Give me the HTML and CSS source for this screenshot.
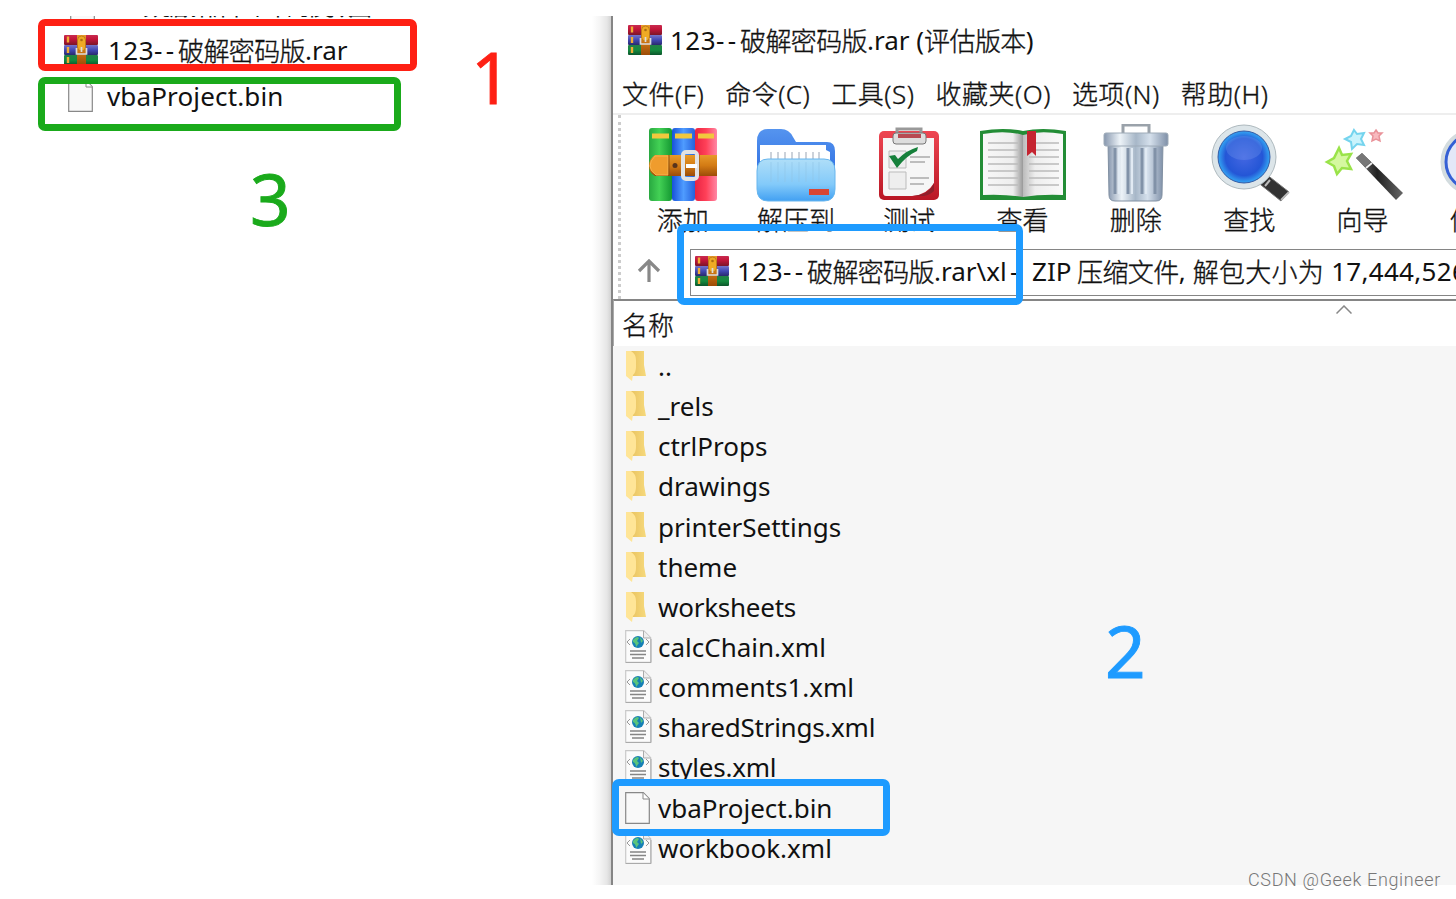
FILE: index.html
```
<!DOCTYPE html>
<html lang="zh-CN">
<head>
<meta charset="utf-8">
<title>123--破解密码版.rar</title>
<link rel="stylesheet" href="styles.css">
</head>
<body>
<svg class="defs" width="0" height="0">
  <defs>
    <linearGradient id="strap" x1="0" y1="0" x2="0" y2="1"><stop offset="0" stop-color="#e89a2a"/><stop offset=".5" stop-color="#d37b14"/><stop offset="1" stop-color="#9c4c08"/></linearGradient>
    <linearGradient id="rRed" x1="0" y1="0" x2="0" y2="1"><stop offset="0" stop-color="#c82c50"/><stop offset=".4" stop-color="#c4163a"/><stop offset="1" stop-color="#7c1528"/></linearGradient>
    <linearGradient id="rBlue" x1="0" y1="0" x2="0" y2="1"><stop offset="0" stop-color="#7775c9"/><stop offset=".5" stop-color="#4148b4"/><stop offset="1" stop-color="#29296d"/></linearGradient>
    <linearGradient id="rGreen" x1="0" y1="0" x2="0" y2="1"><stop offset="0" stop-color="#248048"/><stop offset=".5" stop-color="#148b3f"/><stop offset="1" stop-color="#0c552b"/></linearGradient>
    <linearGradient id="bGreen"><stop offset="0" stop-color="#28a840"/><stop offset=".45" stop-color="#43d155"/><stop offset="1" stop-color="#149832"/></linearGradient>
    <linearGradient id="bBlue"><stop offset="0" stop-color="#1751d9"/><stop offset=".5" stop-color="#4f9cff"/><stop offset="1" stop-color="#2661dc"/></linearGradient>
    <linearGradient id="bRed"><stop offset="0" stop-color="#e82342"/><stop offset=".5" stop-color="#ff4058"/><stop offset="1" stop-color="#ff87a5"/></linearGradient>
    <linearGradient id="pocket" x1="0" y1="0" x2="0" y2="1"><stop offset="0" stop-color="#afdef8"/><stop offset=".6" stop-color="#83cafa"/><stop offset="1" stop-color="#42a0f2"/></linearGradient>
    <linearGradient id="back" x1="0" y1="0" x2="0" y2="1"><stop offset="0" stop-color="#5594ef"/><stop offset="1" stop-color="#2868df"/></linearGradient>
    <linearGradient id="board" x1="0" y1="0" x2="0" y2="1"><stop offset="0" stop-color="#ee4652"/><stop offset="1" stop-color="#b91725"/></linearGradient>
    <linearGradient id="pageL"><stop offset="0" stop-color="#f8f8f8"/><stop offset=".75" stop-color="#eee"/><stop offset="1" stop-color="#999"/></linearGradient>
    <linearGradient id="pageR"><stop offset="0" stop-color="#bbb"/><stop offset=".3" stop-color="#eee"/><stop offset="1" stop-color="#fafafa"/></linearGradient>
    <linearGradient id="can"><stop offset="0" stop-color="#8797ae"/><stop offset=".25" stop-color="#edf3f8"/><stop offset=".5" stop-color="#a7b7c8"/><stop offset=".72" stop-color="#d5e0ec"/><stop offset="1" stop-color="#7f90a8"/></linearGradient>
    <radialGradient id="lens" cx=".5" cy=".5" r=".55"><stop offset="0" stop-color="#4467e2"/><stop offset=".65" stop-color="#2456d6"/><stop offset=".88" stop-color="#329df0"/><stop offset="1" stop-color="#1c49ac"/></radialGradient>
    <linearGradient id="wand"><stop offset="0" stop-color="#777"/><stop offset=".45" stop-color="#222"/><stop offset="1" stop-color="#666"/></linearGradient>
    <linearGradient id="fold"><stop offset="0" stop-color="#e9c25f"/><stop offset="1" stop-color="#f6d97c"/></linearGradient>
    <symbol id="rar" viewBox="0 0 34 30">
      <rect width="34" height="10" rx="1" fill="url(#rRed)"/><rect y="10" width="34" height="10" rx="1" fill="url(#rBlue)"/><rect y="20" width="34" height="10" rx="1" fill="url(#rGreen)"/>
      <path d="M4 1.5v6M4 12v6M4 22v6" stroke="#f1ac35" stroke-width="2.4"/>
      <rect x="13" width="9" height="30" fill="url(#strap)"/><rect x="13.5" y="1" width="8" height="15" rx="4" fill="#efaa24" stroke="#ac6b18" stroke-width=".7"/>
      <circle cx="17.500" cy="5" r="1.300" fill="#aa6d11"/><path d="M12.500 13v6h10v-6M17.500 12v5" fill="none" stroke="#ddd" stroke-width="1.700"/>
    </symbol>
    <symbol id="folder" viewBox="0 0 20 30"><path d="M4 0h14v14l2 11H5z" fill="url(#fold)"/><path d="M0 0h5q5 3 5 9v7q0 5-3 8l-1 6-6-5z" fill="#ffe597"/></symbol>
    <symbol id="page" viewBox="0 0 25 32"><path d="M.7.7h17.600l6 6v24.600H.7z" fill="#f9f9f9" stroke="#888" stroke-width="1.200"/><path d="M18 1v6h6" fill="#fff" stroke="#888"/></symbol>
    <symbol id="xml" viewBox="0 0 27 34">
      <path d="M.7.7h18l7 7v24.600H.7z" fill="#fbfbfb" stroke="#c8c8c8" stroke-width="1.200"/><path d="M1 32.500h25V9" fill="none" stroke="#aaa"/><path d="M18.500 1v7h7" fill="#eee" stroke="#aaa"/>
      <circle cx="13" cy="12" r="6" fill="#1680b5"/><path d="M8 10q4-5 6-2l-2 3 2 2-3 4q0-4-3-5zM15 7l3 4-2 2z" fill="#5bc47a"/><path d="M5 9l-3 3 3 3M21 9l3 3-3 3" fill="none" stroke="#999"/>
      <path d="M5 21h16M5 24.500h16M7 28h12" stroke="#858585" stroke-width="1.500"/>
    </symbol>
  </defs>
</svg>
<main class="shot">
  <section class="desktop">
    <div class="file cut"><svg class="cut-page"><use href="#page"/></svg><span>数据解析下个中的模拟图</span></div>
    <div class="file first"><svg class="rar"><use href="#rar"/></svg><span class="name"><i class="num">123</i><i class="dashes">--</i><i class="han">破解密码版</i><i>.rar</i></span></div>
    <div class="file second"><svg class="page"><use href="#page"/></svg><span class="name">vbaProject.bin</span></div>
  </section>
  <section class="window">
    <header class="title"><svg class="rar"><use href="#rar"/></svg><span class="name"><i class="num">123</i><i class="dashes">--</i><i class="han">破解密码版</i><i>.rar (</i><i class="han">评估版本</i><i>)</i></span></header>
    <nav class="menu"><span>文件(F)</span><span>命令(C)</span><span>工具(S)</span><span>收藏夹(O)</span><span>选项(N)</span><span>帮助(H)</span></nav>
    <div class="bars">
      <div class="toolbar">
        <div class="tool"><svg viewBox="0 0 90 80"><rect x="11" y="4" width="23" height="73" rx="3" fill="url(#bGreen)"/><rect x="34" y="4" width="23" height="73" rx="3" fill="url(#bBlue)"/><rect x="57" y="4" width="22" height="73" rx="3" fill="url(#bRed)"/><path d="M14 12h17M37 12h17M60 12h16" stroke="#f1c83d" stroke-width="5"/><path d="M17 31h62v21H17q-6-3-6-10t6-11z" fill="url(#strap)"/><path d="M17 32h13v19H18q-6-4-6-9t5-10z" fill="#ef9c2d" stroke="#f6b34e"/><path d="M31 31v21M61 31v21" stroke="#8e5010"/><circle cx="37" cy="41.500" r="2.500" fill="#59341c"/><rect x="45" y="28" width="14" height="27" rx="3" fill="none" stroke="#e2e2e4" stroke-width="4"/><path d="M48 42h11" stroke="#fff" stroke-width="4"/></svg><span>添加</span></div>
        <div class="tool"><svg viewBox="0 0 90 80"><path d="M6 17q0-12 11-12h13q8 0 12 8l3 5h31q8 0 8 9v35H6z" fill="url(#back)"/><path d="M9 21h66v5l4 2v31H9z" fill="#fff"/><path d="M20 28v16M27 28v16M34 28v16M41 28v16M48 28v16M55 28v16M62 28v16M68 28v16" stroke="#bcc3ce" stroke-width="1.500"/><path d="M6 47q0-12 11-12h56q11 0 11 12v18q0 12-11 12H17Q6 77 6 65z" fill="url(#pocket)" stroke="#68b6ee"/><path d="M20 38v20M27 38v20M34 38v20M41 38v20M48 38v20M55 38v20M62 38v20M68 38v20" stroke="#8fc5e7" opacity=".6"/><rect x="58" y="65" width="20" height="6" fill="#d84534"/></svg><span>解压到</span></div>
        <div class="tool"><svg viewBox="0 0 90 80"><rect x="15" y="7" width="60" height="69" rx="5" fill="url(#board)"/><path d="M19 14h51v45q-7 12-22 13H22q-3 0-3-4z" fill="#f6f6f6"/><path d="M49 72q16-1 21-13v8q-4 4-10 5z" fill="#8f202b"/><path d="M33 9V5h24v4" fill="none" stroke="#999" stroke-width="3"/><rect x="29" y="9" width="33" height="11" rx="3" fill="#ddd" stroke="#777"/><rect x="34" y="10" width="23" height="4" fill="#b84a52"/><path d="M25 27h17v17H25zM25 48h17v17H25z" fill="#eee" stroke="#bbb"/><path d="M25 32l6-1 3 4q9-9 20-12l-1 4q-11 5-20 17z" fill="#16803b"/><path d="M46 33h20M46 38h15M46 54h19M46 60h14" stroke="#aaa" stroke-width="1.400"/></svg><span>测试</span></div>
        <div class="tool"><svg viewBox="0 0 90 80"><path d="M2 7q24-4 43 0 19-4 43 0v69H2z" fill="#238d36"/><path d="M5 10q23-4 40 1v62q-18-3-40-2z" fill="url(#pageL)"/><path d="M45 11q17-5 40-1v61q-22-1-40 2z" fill="url(#pageR)"/><path d="M10 19h30M10 26h30M10 33h30M10 40h30M10 47h30M10 54h30M10 61h30M51 19h30M51 26h30M51 33h30M51 40h30M51 47h30M51 54h30M51 61h30" stroke="#bbb" stroke-width="1.300"/><path d="M49 7h9v25l-4-4-5 4z" fill="#c52430"/></svg><span>查看</span></div>
        <div class="tool"><svg viewBox="0 0 90 80"><path d="M32 9V1h26v8" fill="none" stroke="#9aa2aa" stroke-width="3"/><path d="M17 18h55l-1 53q0 6-6 6H24q-6 0-6-6z" fill="url(#can)" stroke="#8190a2"/><rect x="13" y="9" width="64" height="13" rx="2" fill="url(#can)" stroke="#9eabb8"/><path d="M24 24v46M37 24v46M51 24v46M64 24v46" stroke="#8192a8" stroke-width="3"/><path d="M28 24v46M41 24v46M55 24v46" stroke="#e1eaf3" stroke-width="2"/></svg><span>删除</span></div>
        <div class="tool"><svg viewBox="0 0 90 80"><path d="M62 50l23 18-8 9-25-20z" fill="#333" stroke="#777"/><path d="M66 56l-5 6M85 68l-8 8" stroke="#bbb" stroke-width="2"/><circle cx="40" cy="33" r="32" fill="#dce5e9" stroke="#aeb9be"/><circle cx="40" cy="33" r="26" fill="url(#lens)" stroke="#365ea7"/><ellipse cx="40" cy="24" rx="18" ry="12" fill="#789cf0" opacity=".3"/></svg><span>查找</span></div>
        <div class="tool"><svg viewBox="0 0 90 80"><path d="M45 29l-6 5 40 42 7-7z" fill="url(#wand)"/><path d="M45 29l-6 5 9 9 6-5z" fill="#777"/><path d="M49 44l6-5" stroke="#eee" stroke-width="2"/><path d="M22 24l3 7 9-1-4 7 4 8-9-1-5 6-3-8-7-4 7-4z" fill="#d5f8a0" stroke="#9ae34a" stroke-width="2.500"/><path d="M37 6l3 4 7-1-3 6 3 6-7-1-5 5-1-7-6-3 6-3z" fill="#c9f3fc" stroke="#75d4ee" stroke-width="2"/><path d="M59 6l2 3h4l-3 3 1 5-4-2-4 2 1-5-3-3h4z" fill="#f8b9be" stroke="#e99299" stroke-width="1.500"/></svg><span>向导</span></div>
        <div class="tool"><svg viewBox="0 0 90 80"><circle cx="43" cy="38" r="31" fill="#e1e7f8" stroke="#d3dcdf" stroke-width="5"/><circle cx="43" cy="38" r="28" fill="#e3e8f8" stroke="#3560d5" stroke-width="3"/></svg><span>信息</span></div>
      </div>
      <div class="address">
        <svg class="up" viewBox="0 0 24 24"><path d="M12 23V2M2 12L12 2l10 10" fill="none" stroke="#888" stroke-width="3.200"/></svg>
        <div class="field"><svg class="rar"><use href="#rar"/></svg><span class="name"><i class="num">123</i><i class="dashes">--</i><i class="han">破解密码版</i><i class="path">.rar\xl</i><i class="dash">-</i><i class="zip">ZIP</i><i class="han">压缩文件</i><i class="comma">,</i><i class="han wide">解包大小为</i><i class="size">17,444,526</i></span></div>
      </div>
    </div>
    <div class="column"><span>名称</span><svg class="sort" viewBox="0 0 16 9"><path d="M.5 8.500L8 1l7.500 7.500" fill="none" stroke="#888" stroke-width="1.500"/></svg></div>
    <div class="list">
      <div class="row"><svg class="folder"><use href="#folder"/></svg><span>..</span></div>
      <div class="row"><svg class="folder"><use href="#folder"/></svg><span>_rels</span></div>
      <div class="row"><svg class="folder"><use href="#folder"/></svg><span>ctrlProps</span></div>
      <div class="row"><svg class="folder"><use href="#folder"/></svg><span>drawings</span></div>
      <div class="row"><svg class="folder"><use href="#folder"/></svg><span>printerSettings</span></div>
      <div class="row"><svg class="folder"><use href="#folder"/></svg><span>theme</span></div>
      <div class="row"><svg class="folder"><use href="#folder"/></svg><span class="tight">worksheets</span></div>
      <div class="row"><svg class="xml"><use href="#xml"/></svg><span>calcChain.xml</span></div>
      <div class="row"><svg class="xml"><use href="#xml"/></svg><span>comments1.xml</span></div>
      <div class="row"><svg class="xml"><use href="#xml"/></svg><span class="tight">sharedStrings.xml</span></div>
      <div class="row"><svg class="xml"><use href="#xml"/></svg><span class="tight">styles.xml</span></div>
      <div class="row"><svg class="page"><use href="#page"/></svg><span>vbaProject.bin</span></div>
      <div class="row"><svg class="xml"><use href="#xml"/></svg><span>workbook.xml</span></div>
    </div>
  </section>
</main>
<div class="mark red"></div><div class="mark green"></div><div class="mark blue path-mark"></div><div class="mark blue file-mark"></div>
<b class="digit one">1</b><b class="digit two">2</b><b class="digit three">3</b>
<div class="credit">CSDN @Geek Engineer</div>
</body>
</html>
```
FILE: styles.css
```
* { box-sizing: border-box; }
body { margin: 0; height: 899px; padding: 16px 0 14px; overflow: hidden; position: relative; background: #fff; color: #111; font: 26px/40px "Noto Sans", "Noto Sans CJK SC", sans-serif; white-space: nowrap; }
svg { display: block; flex: none; }
i { font-style: normal; }
.defs { position: absolute; }
.shot { display: flex; height: 869px; overflow: hidden; }

.desktop { width: 611px; flex: none; background: linear-gradient(90deg, #fff 592px, #f4f4f4 600px, #e6e6e6 607px, #d2d2d2); }
.file { display: flex; align-items: center; }
.cut { height: 5px; padding-left: 70px; overflow: hidden; align-items: flex-end; }
.cut span { padding-left: 48px; font-size: 24px; line-height: 30px; letter-spacing: -3.500px; }
.cut-page { width: 25px; height: 32px; }
.first { height: 57px; padding-left: 64px; }
.second { height: 36px; padding-left: 68px; }
.first .name { margin-left: 10px; }
.second .name { margin-left: 14px; letter-spacing: .15px; }
.rar { width: 34px; height: 30px; }
.page { width: 25px; height: 32px; }
.name { display: flex; }
.num { width: 46px; letter-spacing: .5px; }
.dashes { width: 24px; letter-spacing: 3.400px; }
.han { font-family: "Noto Sans CJK SC", sans-serif; font-weight: 300; letter-spacing: -.6px; }
.wide { letter-spacing: .3px; }
.han, .menu, .tool, .column { -webkit-text-stroke: .35px #111; }

.window { width: 845px; flex: none; border-left: 2px solid #858585; overflow: hidden; display: flex; flex-direction: column; }
.title { display: flex; align-items: center; height: 48px; padding-left: 15px; }
.title .name { margin-left: 8px; }
.menu { display: flex; gap: 21px; height: 51px; align-items: center; padding: 10px 0 0 9px; font-weight: 300; letter-spacing: .5px; border-bottom: 2px solid #eee; }
.bars { height: 184px; margin-left: 5px; border-left: 3px dotted #ccc; }
.toolbar { height: 128px; display: flex; padding: 9px 0 0 5px; }
.tool { width: 113.300px; flex: none; display: flex; flex-direction: column; align-items: center; font-family: "Noto Sans CJK SC", sans-serif; font-weight: 300; }
.tool svg { width: 90px; height: 80px; }
.tool span { line-height: 30px; }
.address { display: flex; height: 56px; align-items: center; padding-left: 16px; }
.up { width: 24px; height: 24px; margin-right: 29px; }
.field { height: 47px; width: 800px; flex: none; margin-top: 2px; border: 1.500px solid #858585; display: flex; align-items: center; padding: 0 0 2px 4px; }
.field .name { margin-left: 8px; }
.path { width: 76px; }
.dash { width: 22px; }
.zip { width: 45px; }
.comma { width: 14px; }
.size { padding-left: 7px; letter-spacing: .3px; }
.column { height: 47px; position: relative; border-top: 2px solid #858585; border-left: 1px solid #aaa; padding: 3px 0 0 8px; background: #fff; font-family: "Noto Sans CJK SC", sans-serif; font-weight: 300; }
.sort { position: absolute; left: 722px; top: 4px; width: 16px; height: 9px; }
.list { flex: 1; background: #f6f6f6; padding-left: 12px; }
.row { height: 40.150px; display: flex; align-items: center; }
.row span { margin-left: -1px; }
.row .tight { letter-spacing: -.25px; }
.folder { width: 20px; height: 30px; }
.row .folder { margin-right: 13px; margin-left: 1px; }
.xml { width: 27px; height: 34px; }
.row .xml { margin-right: 7px; }
.row .page { margin-right: 9px; }

.mark { position: absolute; border: 7px solid; border-radius: 7px; }
.red { left: 38px; top: 19px; width: 379px; height: 52px; border-color: #fe2014; }
.green { left: 38px; top: 77px; width: 363px; height: 54px; border-color: #1aaa1b; }
.blue { border-color: #1e9bff; }
.path-mark { left: 677px; top: 224px; width: 346px; height: 81px; }
.file-mark { left: 612px; top: 779px; width: 278px; height: 57px; }
.digit { position: absolute; font: 71px/80px "Noto Sans", sans-serif; -webkit-text-stroke: .9px currentColor; }
.one { left: 471px; top: 37px; color: #fe2014; }
.two { left: 1105px; top: 611px; color: #1e9bff; }
.three { left: 250px; top: 159px; color: #1aaa1b; }
.credit { position: absolute; right: 15px; top: 868px; font: 300 18px/24px Roboto, sans-serif; letter-spacing: .650px; color: #777; }
```
